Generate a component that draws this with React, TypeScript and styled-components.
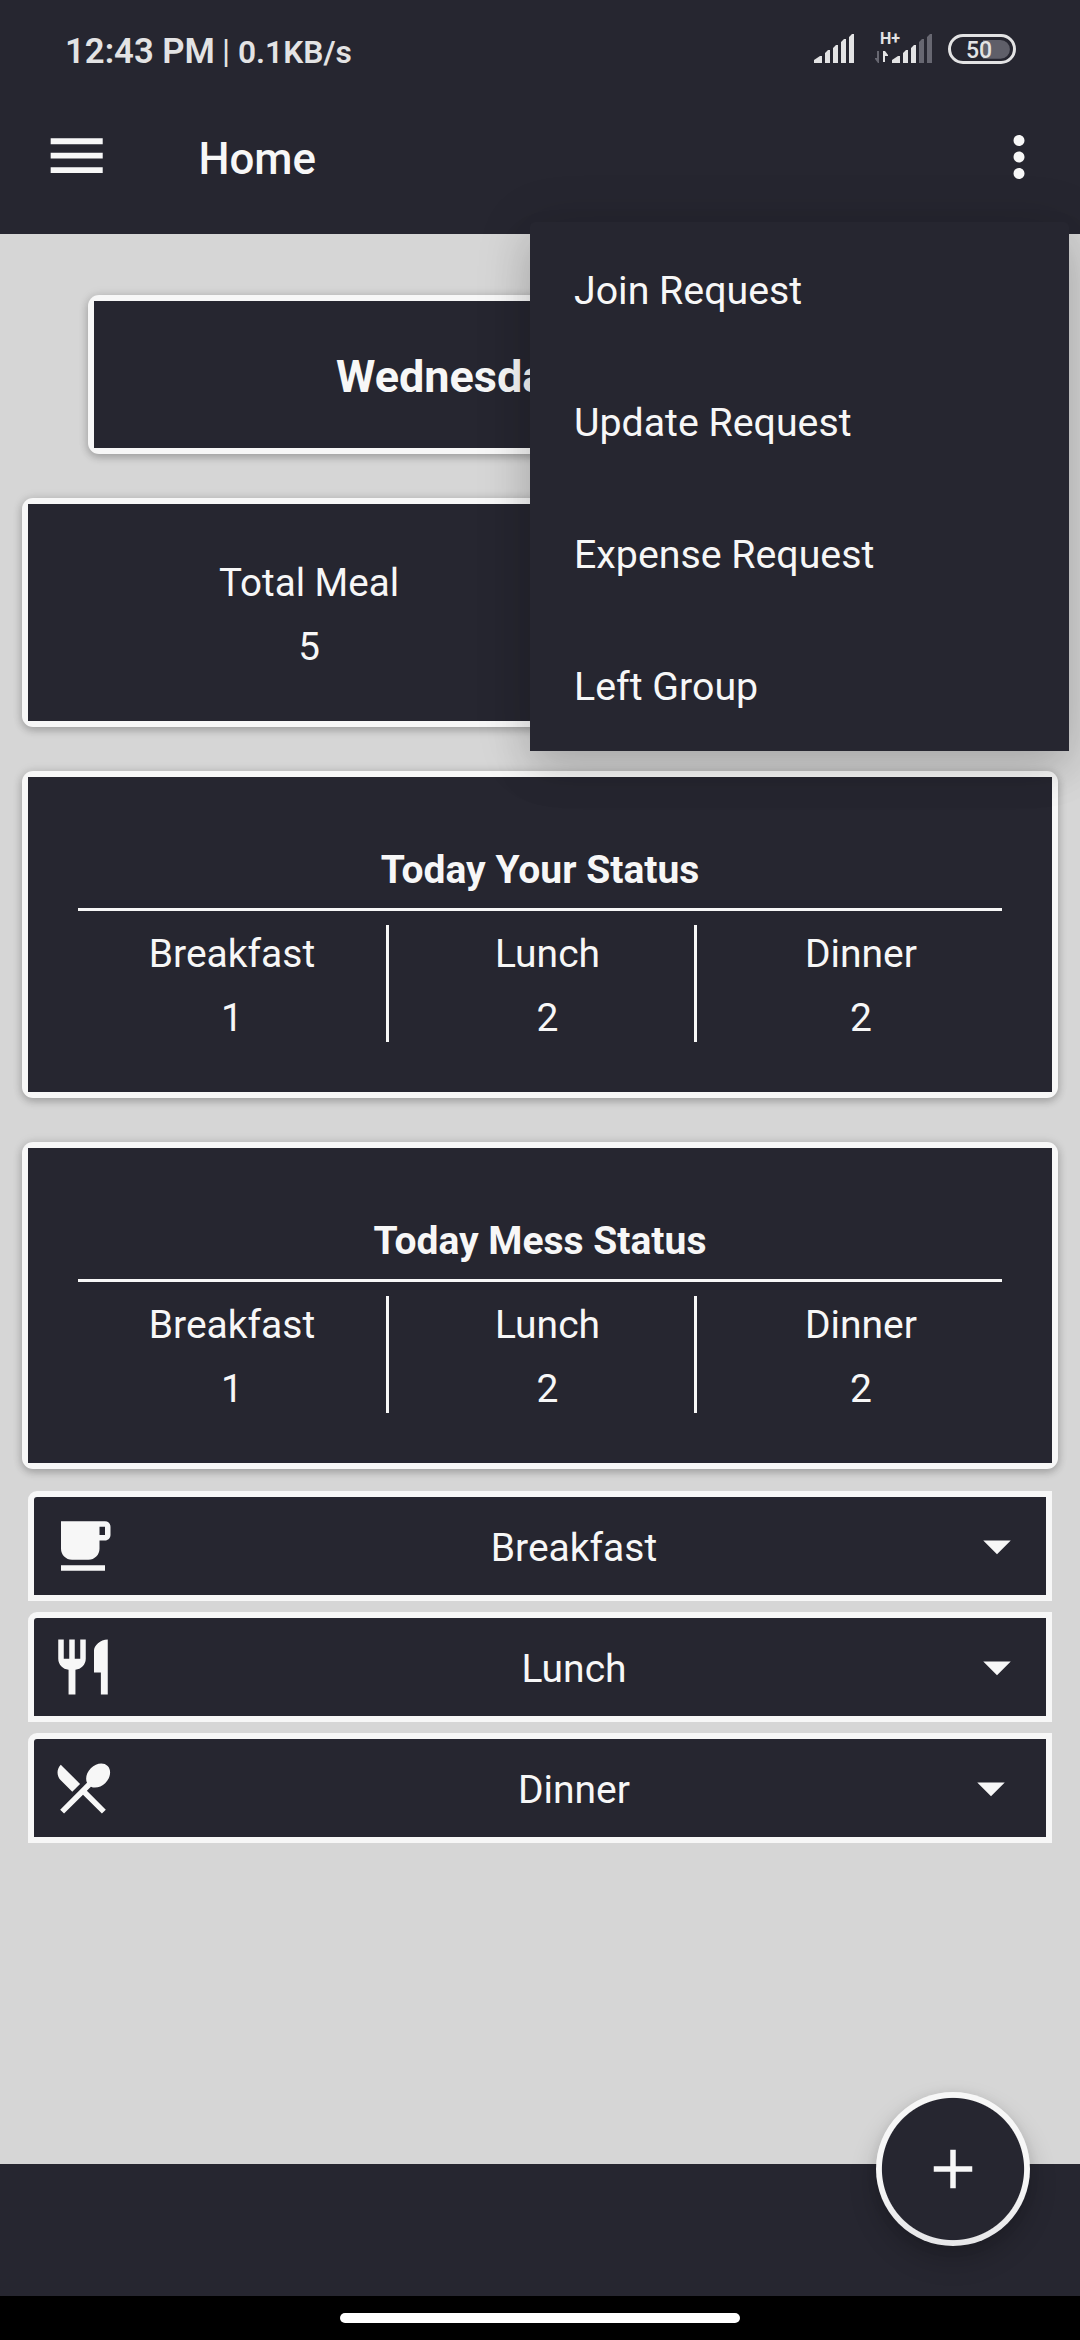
import React from "react";
import styled, { createGlobalStyle } from "styled-components";

const ink = "#262630";
const paper = "#f7f7f7";
const canvas = "#d6d6d6";

const GlobalStyle = createGlobalStyle`
  * { box-sizing: border-box; }
  body { margin: 0; background: ${canvas}; }
`;

const Screen = styled.div`
  position: relative;
  display: flex;
  flex-direction: column;
  width: 1080px;
  height: 2340px;
  overflow: hidden;
  background: ${canvas};
  color: ${paper};
  font-family: Roboto, "Noto Sans", sans-serif;
  font-size: 39px;
  line-height: 64px;
`;

const Header = styled.header`
  height: 234px;
  flex: none;
  background: ${ink};
`;

const StatusBar = styled.div`
  height: 98px;
  padding: 0 64px 0 65px;
  display: flex;
  align-items: center;
  justify-content: space-between;
  color: #e3e3e4;
`;

const StatusText = styled.div`
  display: flex;
  align-items: baseline;
  line-height: 42px;
  padding-top: 5px;
`;

const Clock = styled.span`
  width: 157px;
  font-size: 34.7px;
  font-weight: 600;
`;

const Bar = styled.span`
  width: 16px;
  font-size: 33px;
  font-weight: 400;
`;

const Speed = styled.span`
  font-size: 31.7px;
  font-weight: 600;
`;

const StatusIcons = styled.svg`
  display: block;
  width: 204px;
  height: 46px;
  margin-top: -1px;
`;

const AppBar = styled.div`
  height: 118px;
  display: flex;
  align-items: center;
  padding: 0 28px 0 42px;
`;

const Glyph = styled.svg<{ $size?: number }>`
  display: block;
  flex: none;
  width: ${(p) => p.$size ?? 66}px;
  height: ${(p) => p.$size ?? 66}px;
  fill: ${paper};
`;

const MenuGlyph = styled(Glyph)`
  margin-bottom: 3px;
`;

const AppTitle = styled.h1`
  flex: 1;
  margin: 0 0 0 87px;
  padding-top: 4px;
  font-size: 43.8px;
  font-weight: 500;
  line-height: 52px;
`;

const Main = styled.main`
  flex: 1;
  display: flex;
  flex-direction: column;
  align-items: center;
  gap: 44px;
  padding-top: 61px;
`;

const Frame = styled.section<{ $width: number; $height: number }>`
  flex: none;
  width: ${(p) => p.$width}px;
  height: ${(p) => p.$height}px;
  padding: 6px;
  border-radius: 11px;
  background: ${paper};
  box-shadow: 0 3px 9px rgba(0, 0, 0, 0.24), 0 0 12px rgba(0, 0, 0, 0.08);
`;

const DatePanel = styled.div`
  height: 100%;
  display: flex;
  align-items: center;
  padding: 4px 0 0 242px;
  background: ${ink};
  font-size: 45px;
  font-weight: 700;
`;

const TotalsPanel = styled.div`
  height: 100%;
  display: grid;
  grid-template-columns: 1fr 1fr;
  padding: 50px 50px 0;
  background: ${ink};
  font-size: 38.6px;
`;

const StatusPanel = styled.div`
  height: 100%;
  padding: 61px 50px 0;
  background: ${ink};
`;

const PanelTitle = styled.h2`
  margin: 0;
  height: 73px;
  border-bottom: 3px solid ${paper};
  font-size: 39px;
  font-weight: 700;
  line-height: 64px;
  text-align: center;
`;

const Meals = styled.div`
  display: grid;
  grid-template-columns: 311px 308px 305px;
  grid-template-rows: 117px;
  margin-top: 14px;
`;

const Stat = styled.div<{ $indent?: number; $divided?: boolean }>`
  display: flex;
  flex-direction: column;
  align-items: center;
  padding-left: ${(p) => p.$indent ?? 0}px;
  border-right: ${(p) => (p.$divided ? `3px solid ${paper}` : "none")};
  line-height: 64px;

  span:first-child {
    margin-top: -3px;
  }
`;

const Accordion = styled.div`
  display: flex;
  flex-direction: column;
  gap: 11px;
  width: 1024px;
  margin-top: -22px;
`;

const AccordionRow = styled.button<{ $extra: number }>`
  display: flex;
  align-items: center;
  height: 110px;
  margin: 0;
  padding: 0 ${(p) => 16 + p.$extra}px 0 16px;
  border: 6px solid ${paper};
  border-radius: 9px 0 0 0;
  background: ${ink};
  color: inherit;
  font: inherit;

  span {
    flex: 1;
    padding-top: 3px;
    padding-left: ${(p) => 68 + p.$extra}px;
    text-align: center;
  }
`;

const BottomBar = styled.footer`
  flex: none;
  height: 132px;
  background: ${ink};
`;

const NavBar = styled.div`
  flex: none;
  height: 44px;
  display: flex;
  align-items: center;
  justify-content: center;
  background: #000;
`;

const HomeIndicator = styled.div`
  width: 400px;
  height: 10px;
  margin-bottom: 1px;
  border-radius: 5px;
  background: #fff;
`;

const PopupMenu = styled.ul`
  position: absolute;
  top: 222px;
  left: 530px;
  width: 539px;
  height: 529px;
  margin: 0;
  padding: 3px 0 0;
  overflow: hidden;
  list-style: none;
  border-radius: 5px 5px 0 0;
  background: ${ink};
  font-size: 39.3px;
  box-shadow: 0 22px 40px rgba(0, 0, 0, 0.1), 0 6px 56px rgba(0, 0, 0, 0.16);
`;

const MenuItem = styled.li`
  height: 132px;
  padding-left: 44px;
  line-height: 132px;
`;

const Fab = styled.button`
  position: absolute;
  top: 2092px;
  left: 876px;
  width: 154px;
  height: 154px;
  display: grid;
  place-items: center;
  padding: 0;
  border: 0;
  border-radius: 50%;
  background: radial-gradient(circle, ${ink} 70.6px, transparent 71.6px),
    linear-gradient(${paper} 55%, #e6e6e8);
  box-shadow: 0 14px 28px rgba(0, 0, 0, 0.2), 0 2px 12px rgba(0, 0, 0, 0.08);
`;

const arrow = "M7 10l5 5 5-5z";

const rows = [
  {
    label: "Breakfast",
    extra: 0,
    path: "M20 3H4v10c0 2.21 1.79 4 4 4h6c2.21 0 4-1.79 4-4v-3h2c1.11 0 2-.89 2-2V5c0-1.11-.89-2-2-2zm0 5h-2V5h2v3zM4 19h16v2H4z",
  },
  {
    label: "Lunch",
    extra: 0,
    path: "M11 9H9V2H7v7H5V2H3v7c0 2.12 1.66 3.84 3.75 3.97V22h2.5v-9.03C11.34 12.84 13 11.12 13 9V2h-2v7zm5-3v8h2.5v8H21V2c-2.76 0-5 2.24-5 4z",
  },
  {
    label: "Dinner",
    extra: 6,
    path: "M8.1 13.34l2.83-2.83L3.91 3.5c-1.56 1.56-1.56 4.09 0 5.66l4.19 4.18zm6.78-1.81c1.53.71 3.68.21 5.27-1.38 1.91-1.91 2.28-4.65.81-6.12-1.46-1.46-4.2-1.1-6.12.81-1.59 1.59-2.09 3.74-1.38 5.27L3.7 19.87l1.41 1.41L12 14.41l6.88 6.88 1.41-1.41L13.41 13l1.47-1.47z",
  },
];

const menu = ["Join Request", "Update Request", "Expense Request", "Left Group"];

const StatusCard = ({ title }: { title: string }) => (
  <Frame $width={1036} $height={327}>
    <StatusPanel>
      <PanelTitle>{title}</PanelTitle>
      <Meals>
        <Stat $divided>
          <span>Breakfast</span>
          <span>1</span>
        </Stat>
        <Stat $divided $indent={12}>
          <span>Lunch</span>
          <span>2</span>
        </Stat>
        <Stat $indent={23}>
          <span>Dinner</span>
          <span>2</span>
        </Stat>
      </Meals>
    </StatusPanel>
  </Frame>
);

export default function App() {
  return (
    <>
      <GlobalStyle />
      <Screen>
        <Header>
          <StatusBar>
            <StatusText>
              <Clock>12:43 PM</Clock>
              <Bar>|</Bar>
              <Speed>0.1KB/s</Speed>
            </StatusText>
            <StatusIcons viewBox="812 26 204 46">
              <g fill="#e3e3e4">
                <path d="M814 63v-3l6-4h2v7zM825 63V53l3-3h2v13zM833 63V48l3-3h2v18zM841 63V42l3-3h2v24zM849 63V37l3-3h2v29z" />
                <path d="M892 63v-3l6-4h2v7zM903 63V53l3-3h2v13zM911 63V48l3-3h2v18z" />
                <path d="M883 51h2l3 4v1h-3v6h-2z" />
              </g>
              <g fill="#676771">
                <path d="M919 63V42l3-3h2v24zM927 63V37l3-3h2v29z" />
                <path d="M877 51h2v12h-1l-3-4v-1h2z" />
              </g>
              <text x="880" y="44" fill="#e3e3e4" fontSize="16" fontWeight="700">
                H+
              </text>
              <path d="M983 40h17.500a9.400 9.400 0 0 1 0 18.800H983z" fill="#5f5f69" />
              <rect x="949.500" y="35.500" width="65" height="27" rx="13.500" fill="none" stroke="#e3e3e4" strokeWidth="3" />
              <text x="966" y="58.300" fill="#e3e3e4" fontSize="23" fontWeight="500">
                50
              </text>
            </StatusIcons>
          </StatusBar>
          <AppBar>
            <MenuGlyph viewBox="0 0 24 24" $size={69.4}>
              <path d="M3 18h18v-2H3v2zm0-5h18v-2H3v2zm0-7v2h18V6H3z" />
            </MenuGlyph>
            <AppTitle>Home</AppTitle>
            <Glyph viewBox="0 0 24 24">
              <path d="M12 8c1.100 0 2-.9 2-2s-.9-2-2-2-2 .9-2 2 .9 2 2 2zm0 2c-1.100 0-2 .9-2 2s.9 2 2 2 2-.9 2-2-.9-2-2-2zm0 6c-1.100 0-2 .9-2 2s.9 2 2 2 2-.9 2-2-.9-2-2-2z" />
            </Glyph>
          </AppBar>
        </Header>
        <Main>
          <Frame $width={904} $height={159}>
            <DatePanel>Wednesday</DatePanel>
          </Frame>
          <Frame $width={1036} $height={229}>
            <TotalsPanel>
              <Stat>
                <span>Total Meal</span>
                <span>5</span>
              </Stat>
            </TotalsPanel>
          </Frame>
          <StatusCard title="Today Your Status" />
          <StatusCard title="Today Mess Status" />
          <Accordion>
            {rows.map((row) => (
              <AccordionRow key={row.label} $extra={row.extra}>
                <Glyph viewBox="0 0 24 24">
                  <path d={row.path} />
                </Glyph>
                <span>{row.label}</span>
                <Glyph viewBox="0 0 24 24">
                  <path d={arrow} />
                </Glyph>
              </AccordionRow>
            ))}
          </Accordion>
        </Main>
        <BottomBar />
        <NavBar>
          <HomeIndicator />
        </NavBar>
        <PopupMenu>
          {menu.map((item) => (
            <MenuItem key={item}>{item}</MenuItem>
          ))}
        </PopupMenu>
        <Fab aria-label="Add">
          <Glyph viewBox="0 0 24 24">
            <path d="M19 13h-6v6h-2v-6H5v-2h6V5h2v6h6v2z" />
          </Glyph>
        </Fab>
      </Screen>
    </>
  );
}
